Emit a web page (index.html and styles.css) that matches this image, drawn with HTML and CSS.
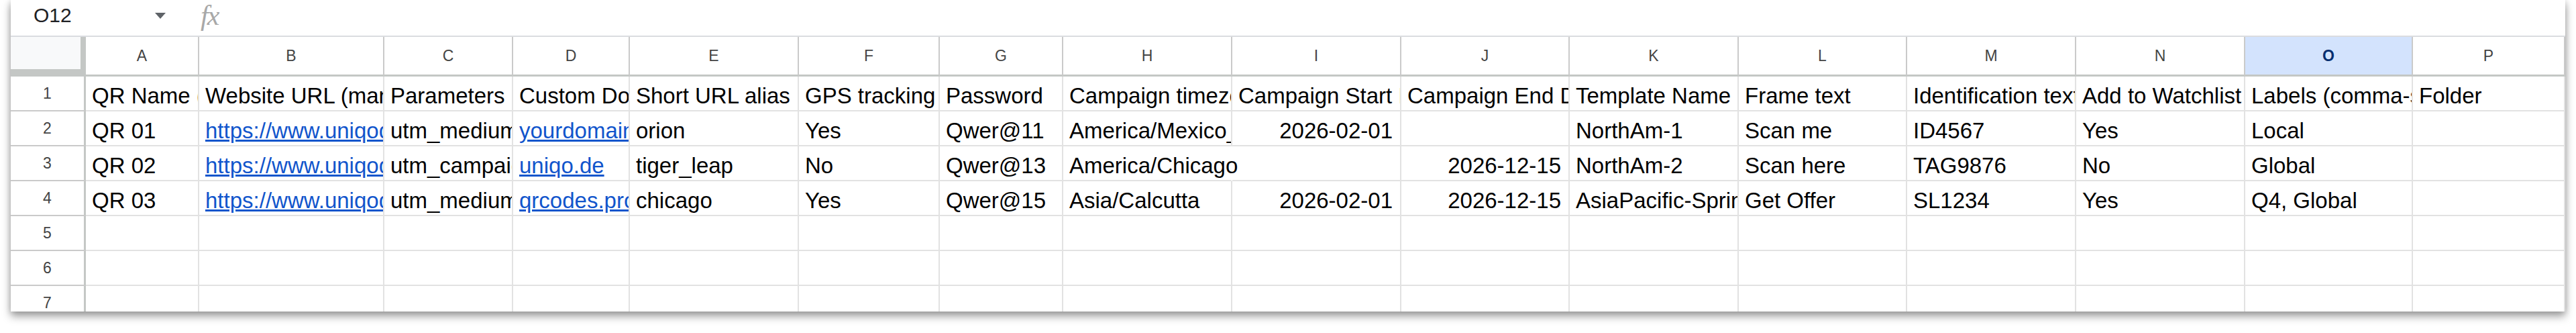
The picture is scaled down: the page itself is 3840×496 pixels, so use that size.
FILE: index.html
```html
<!DOCTYPE html>
<html lang="en">
<head>
  <meta charset="UTF-8" />
  <meta name="viewport" content="width=device-width, initial-scale=1.0"/>
  <title>QR bulk upload sheet</title>
  <link rel="stylesheet" href="styles.css">
</head>
<body>
  <div class="sheet">
    <!-- Barra de fórmulas -->
    <div class="formula-bar">
      <div class="name-box">
        <span class="cell-ref">O12</span>
        <span class="caret"></span>
      </div>
      <span class="fx">fx</span>
    </div>

    <!-- Cabecera de columnas -->
    <div class="row head">
      <div class="corner"></div>
      <div class="col">A</div>
      <div class="col">B</div>
      <div class="col">C</div>
      <div class="col">D</div>
      <div class="col">E</div>
      <div class="col">F</div>
      <div class="col">G</div>
      <div class="col">H</div>
      <div class="col">I</div>
      <div class="col">J</div>
      <div class="col">K</div>
      <div class="col">L</div>
      <div class="col">M</div>
      <div class="col">N</div>
      <div class="col selected">O</div>
      <div class="col">P</div>
    </div>

    <div class="row">
      <div class="num">1</div>
      <div class="cell">QR Name (required)</div>
      <div class="cell">Website URL (mandatory)</div>
      <div class="cell">Parameters (optional)</div>
      <div class="cell">Custom Domain</div>
      <div class="cell">Short URL alias</div>
      <div class="cell">GPS tracking</div>
      <div class="cell">Password</div>
      <div class="cell">Campaign timezone</div>
      <div class="cell">Campaign Start Date</div>
      <div class="cell">Campaign End Date</div>
      <div class="cell">Template Name</div>
      <div class="cell">Frame text</div>
      <div class="cell">Identification text</div>
      <div class="cell">Add to Watchlist</div>
      <div class="cell">Labels (comma-separated)</div>
      <div class="cell">Folder</div>
    </div>

    <div class="row">
      <div class="num">2</div>
      <div class="cell">QR 01</div>
      <div class="cell"><a class="link" href="#">https://www.uniqode.com/qr-code-generator</a></div>
      <div class="cell">utm_medium=qr&amp;utm_source=print</div>
      <div class="cell"><a class="link" href="#">yourdomain.com</a></div>
      <div class="cell">orion</div>
      <div class="cell">Yes</div>
      <div class="cell">Qwer@11</div>
      <div class="cell">America/Mexico_City</div>
      <div class="cell date">2026-02-01</div>
      <div class="cell"></div>
      <div class="cell">NorthAm-1</div>
      <div class="cell">Scan me</div>
      <div class="cell">ID4567</div>
      <div class="cell">Yes</div>
      <div class="cell">Local</div>
      <div class="cell"></div>
    </div>

    <div class="row">
      <div class="num">3</div>
      <div class="cell">QR 02</div>
      <div class="cell"><a class="link" href="#">https://www.uniqode.com/pricing</a></div>
      <div class="cell">utm_campaign=spring</div>
      <div class="cell"><a class="link" href="#">uniqo.de</a></div>
      <div class="cell">tiger_leap</div>
      <div class="cell">No</div>
      <div class="cell">Qwer@13</div>
      <div class="cell spill">America/Chicago</div>
      <div class="cell"></div>
      <div class="cell date">2026-12-15</div>
      <div class="cell">NorthAm-2</div>
      <div class="cell">Scan here</div>
      <div class="cell">TAG9876</div>
      <div class="cell">No</div>
      <div class="cell">Global</div>
      <div class="cell"></div>
    </div>

    <div class="row">
      <div class="num">4</div>
      <div class="cell">QR 03</div>
      <div class="cell"><a class="link" href="#">https://www.uniqode.com/blog</a></div>
      <div class="cell">utm_medium=qr</div>
      <div class="cell"><a class="link" href="#">qrcodes.pro</a></div>
      <div class="cell">chicago</div>
      <div class="cell">Yes</div>
      <div class="cell">Qwer@15</div>
      <div class="cell">Asia/Calcutta</div>
      <div class="cell date">2026-02-01</div>
      <div class="cell date">2026-12-15</div>
      <div class="cell">AsiaPacific-Spring</div>
      <div class="cell">Get Offer</div>
      <div class="cell">SL1234</div>
      <div class="cell">Yes</div>
      <div class="cell">Q4, Global</div>
      <div class="cell"></div>
    </div>

    <div class="row">
      <div class="num">5</div>
      <div class="cell"></div><div class="cell"></div><div class="cell"></div><div class="cell"></div>
      <div class="cell"></div><div class="cell"></div><div class="cell"></div><div class="cell"></div>
      <div class="cell"></div><div class="cell"></div><div class="cell"></div><div class="cell"></div>
      <div class="cell"></div><div class="cell"></div><div class="cell"></div><div class="cell"></div>
    </div>

    <div class="row">
      <div class="num">6</div>
      <div class="cell"></div><div class="cell"></div><div class="cell"></div><div class="cell"></div>
      <div class="cell"></div><div class="cell"></div><div class="cell"></div><div class="cell"></div>
      <div class="cell"></div><div class="cell"></div><div class="cell"></div><div class="cell"></div>
      <div class="cell"></div><div class="cell"></div><div class="cell"></div><div class="cell"></div>
    </div>

    <div class="row">
      <div class="num">7</div>
      <div class="cell"></div><div class="cell"></div><div class="cell"></div><div class="cell"></div>
      <div class="cell"></div><div class="cell"></div><div class="cell"></div><div class="cell"></div>
      <div class="cell"></div><div class="cell"></div><div class="cell"></div><div class="cell"></div>
      <div class="cell"></div><div class="cell"></div><div class="cell"></div><div class="cell"></div>
    </div>
  </div>
</body>
</html>
```

FILE: styles.css
```css
* {
  margin: 0;
  padding: 0;
  box-sizing: border-box;
  font-family: "Liberation Sans", Arial, sans-serif;
}

body {
  width: 3840px;
  height: 496px;
  background-color: #fff;
  overflow: hidden;
}

.sheet {
  width: 3808px;
  height: 464px;
  margin-left: 16px;
  background: #fff;
  overflow: hidden;
  box-shadow: 0 7px 12px rgba(0, 0, 0, 0.38), 0 0 9px rgba(0, 0, 0, 0.14);
  --cols: 112px 169px 276px 192px 174px 252px 210px 184px 252px 252px 251px 252px 251px 252px 252px 250px 227px;
}

/* Barra de fórmulas */
.formula-bar {
  height: 55px;
  display: flex;
  align-items: center;
  padding-left: 34px;
  padding-bottom: 7px;
  border-bottom: 2px solid #dadce0;
}

.name-box {
  display: flex;
  align-items: center;
  width: 197px;
}

.cell-ref {
  width: 181px;
  font-size: 30px;
  color: #202124;
}

.caret {
  width: 0;
  height: 0;
  border-left: 8px solid transparent;
  border-right: 8px solid transparent;
  border-top: 9px solid #5f6368;
}

.fx {
  margin-left: 52px;
  font-family: "Liberation Serif", serif;
  font-style: italic;
  font-size: 42px;
  letter-spacing: -2px;
  color: #a8a8a8;
}

/* Rejilla */
.row {
  display: grid;
  grid-template-columns: var(--cols);
  height: 52px;
}

.row.head {
  height: 59px;
}

.corner {
  background: #f8f9fa;
  border-right: 8px solid #c4c7c5;
  border-bottom: 11px solid #c4c7c5;
}

.col {
  display: flex;
  justify-content: center;
  align-items: center;
  font-size: 23px;
  color: #444;
  border-right: 2px solid #cacaca;
  border-bottom: 3px solid #c4c7c5;
}

.col.selected {
  background: #d3e3fd;
  color: #062e6f;
  font-weight: bold;
}

.num {
  display: flex;
  justify-content: center;
  align-items: center;
  font-size: 23px;
  color: #444;
  border-right: 3px solid #c4c7c5;
  border-bottom: 2px solid #cacaca;
}

.cell {
  display: flex;
  align-items: flex-end;
  padding: 0 0 2px 9px;
  font-size: 33px;
  line-height: 38px;
  color: #000;
  white-space: nowrap;
  overflow: hidden;
  border-right: 2px solid #e2e2e2;
  border-bottom: 2px solid #e2e2e2;
}

.cell.date {
  justify-content: flex-end;
  padding-right: 11px;
}

/* Texto que invade la celda vacía de al lado */
.cell.spill {
  overflow: visible;
  border-right-color: transparent;
}

.link {
  color: #1155cc;
  text-decoration: underline;
}
```
